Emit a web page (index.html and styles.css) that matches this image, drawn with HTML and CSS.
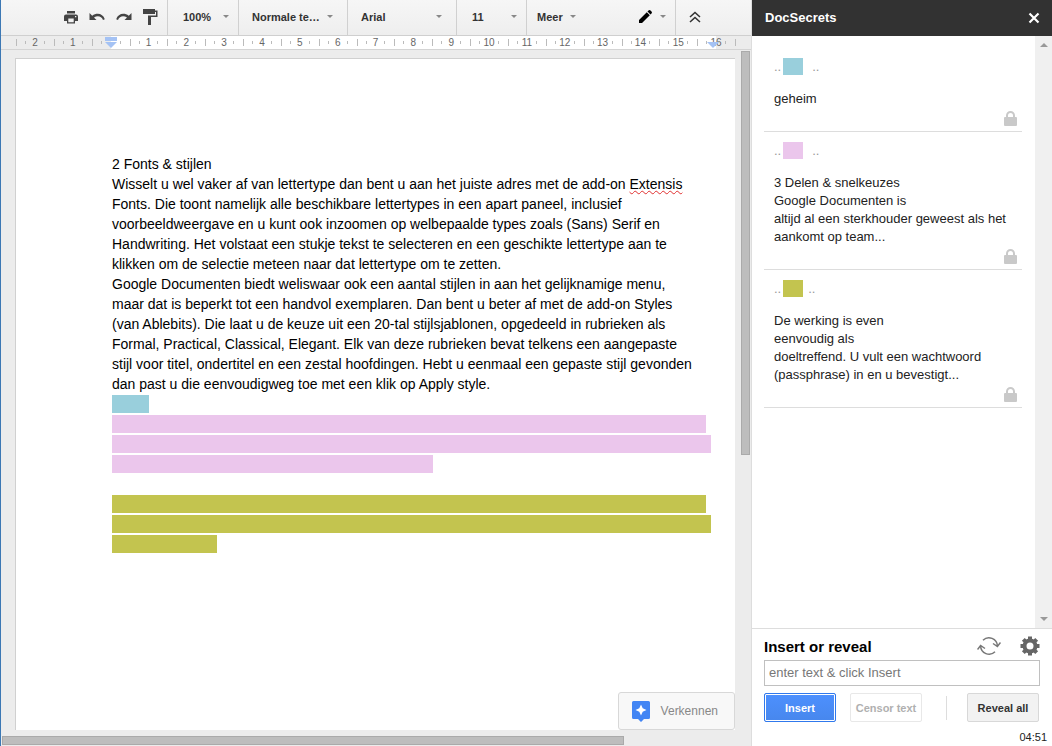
FILE: index.html
```html
<!DOCTYPE html>
<html lang="nl">
<head>
    <meta charset="UTF-8">
    <meta name="viewport" content="width=device-width, initial-scale=1.0">
    <title>DocSecrets</title>
    <link rel="stylesheet" href="styles.css">
</head>
<body>
    <main class="editor">
        <div class="toolbar">
            <div class="tool-group tool-icons">
                <button class="icon-btn" aria-label="Afdrukken">
                    <svg width="16" height="16" viewBox="0 0 16 16"><path fill="#444" d="M4 2h8v2.500H4zM3 5.500h10a2 2 0 0 1 2 2V12h-3v2.500H4V12H1V7.500a2 2 0 0 1 2-2zM5.300 9.500v3.700h5.400V9.500zM12 7v1.200h1.300V7z" fill-rule="evenodd"/></svg>
                </button>
                <button class="icon-btn" aria-label="Ongedaan maken">
                    <svg width="16" height="16" viewBox="0 0 16 16"><path fill="#444" d="M.5 4v7h7L5 8.500C8.500 6.200 12.500 7 14 11l1.800-.7C14 4.500 8 3.200 3.200 6.700z"/></svg>
                </button>
                <button class="icon-btn" aria-label="Opnieuw">
                    <svg width="16" height="16" viewBox="0 0 16 16"><path fill="#444" d="M15.500 4v7h-7L11 8.500C7.500 6.200 3.500 7 2 11l-1.800-.7C2 4.500 8 3.200 12.800 6.700z"/></svg>
                </button>
                <button class="icon-btn" aria-label="Opmaak kopiëren">
                    <svg width="16" height="16" viewBox="0 0 16 16"><path fill="#444" d="M1 0h12v1.500h2.500V8H9v8H6V6.500h8V3h-1v2H1z"/></svg>
                </button>
            </div>
            <label class="tool-group tool-zoom">
                <select class="tool-select" aria-label="Zoomen"><option>100%</option></select>
            </label>
            <label class="tool-group tool-style">
                <select class="tool-select" aria-label="Stijlen"><option>Normale te…</option></select>
            </label>
            <label class="tool-group tool-font">
                <select class="tool-select" aria-label="Lettertype"><option>Arial</option></select>
            </label>
            <label class="tool-group tool-size">
                <select class="tool-select" aria-label="Lettergrootte"><option>11</option></select>
            </label>
            <button class="tool-group tool-more">Meer</button>
            <button class="tool-group tool-mode" aria-label="Bewerkingsmodus">
                <svg width="16" height="16" viewBox="0 0 16 16"><path fill="#000" d="M2 11 9.800 3.200l3 3L5 14H2zM10.500 2.500l1-1a1.400 1.400 0 0 1 2 0l1 1a1.400 1.400 0 0 1 0 2l-1 1z"/></svg>
            </button>
            <button class="tool-group tool-collapse" aria-label="Menu's verbergen">
                <svg width="12" height="12" viewBox="0 0 12 12"><path fill="none" stroke="#333" stroke-width="1.600" d="M1 6l5-4.500L11 6M1 11l5-4.500L11 11"/></svg>
            </button>
        </div>

        <div class="ruler">
            <span class="unit unit-out">2</span>
            <span class="unit unit-out">1</span>
            <span class="unit unit-start"><i class="indent indent-first"></i></span>
            <span class="unit">1</span>
            <span class="unit">2</span>
            <span class="unit">3</span>
            <span class="unit">4</span>
            <span class="unit">5</span>
            <span class="unit">6</span>
            <span class="unit">7</span>
            <span class="unit">8</span>
            <span class="unit">9</span>
            <span class="unit">10</span>
            <span class="unit">11</span>
            <span class="unit">12</span>
            <span class="unit">13</span>
            <span class="unit">14</span>
            <span class="unit">15</span>
            <span class="unit unit-end">16<i class="indent indent-right"></i></span>
            <span class="ruler-rest"></span>
        </div>

        <div class="workspace">
            <article class="page">
                <p>2 Fonts &amp; stijlen</p>
                <p>
                    Wisselt u wel vaker af van lettertype dan bent u aan het juiste adres met de add-on <span class="misspelled">Extensis</span><br>
                    Fonts. Die toont namelijk alle beschikbare lettertypes in een apart paneel, inclusief<br>
                    voorbeeldweergave en u kunt ook inzoomen op welbepaalde types zoals (Sans) Serif en<br>
                    Handwriting. Het volstaat een stukje tekst te selecteren en een geschikte lettertype aan te<br>
                    klikken om de selectie meteen naar dat lettertype om te zetten.
                </p>
                <p>
                    Google Documenten biedt weliswaar ook een aantal stijlen in aan het gelijknamige menu,<br>
                    maar dat is beperkt tot een handvol exemplaren. Dan bent u beter af met de add-on Styles<br>
                    (van Ablebits). Die laat u de keuze uit een 20-tal stijlsjablonen, opgedeeld in rubrieken als<br>
                    Formal, Practical, Classical, Elegant. Elk van deze rubrieken bevat telkens een aangepaste<br>
                    stijl voor titel, ondertitel en een zestal hoofdingen. Hebt u eenmaal een gepaste stijl gevonden<br>
                    dan past u die eenvoudigweg toe met een klik op Apply style.
                </p>
                <div class="secret-block">
                    <div class="secret blue" style="width: 37px"></div>
                    <div class="secret pink" style="width: 594px"></div>
                    <div class="secret pink" style="width: 599px"></div>
                    <div class="secret pink" style="width: 321px"></div>
                </div>
                <div class="secret-block">
                    <div class="secret olive" style="width: 594px"></div>
                    <div class="secret olive" style="width: 599px"></div>
                    <div class="secret olive" style="width: 105px"></div>
                </div>
            </article>
            <div class="scroll-v"><div class="thumb"></div></div>
            <button class="explore">
                <svg width="18" height="21" viewBox="0 0 18 21"><path fill="#4285f4" d="M1.500 0h15A1.500 1.500 0 0 1 18 1.500v15a1.500 1.500 0 0 1-1.500 1.500H12l-3 3-3-3H1.500A1.500 1.500 0 0 1 0 16.500v-15A1.500 1.500 0 0 1 1.500 0z"/><path fill="#fff" d="M9 3.500 10.700 7.300 14.500 9l-3.800 1.700L9 14.500l-1.700-3.800L3.500 9l3.800-1.700z"/></svg>
                Verkennen
            </button>
        </div>
        <div class="scroll-h"><div class="thumb"></div></div>
    </main>

    <aside class="sidebar">
        <header class="side-header">
            <h1>DocSecrets</h1>
            <button class="icon-btn" aria-label="Sluiten">
                <svg width="12" height="12" viewBox="0 0 12 12"><path fill="none" stroke="#fff" stroke-width="2.200" d="M1.500 1.500l9 9M10.500 1.500l-9 9"/></svg>
            </button>
        </header>

        <div class="side-body">
            <ul class="secrets">
                <li>
                    <div class="tag"><span>..</span><b class="swatch blue"></b><span>..</span></div>
                    <p>geheim</p>
                    <svg class="lock" width="13" height="15" viewBox="0 0 13 15"><path fill="#c9c9c9" d="M2 6V4.500a4.500 4.500 0 0 1 9 0V6h1a1 1 0 0 1 1 1v7a1 1 0 0 1-1 1H1a1 1 0 0 1-1-1V7a1 1 0 0 1 1-1zM4 6h5V4.500a2.500 2.500 0 0 0-5 0z" fill-rule="evenodd"/></svg>
                </li>
                <li>
                    <div class="tag"><span>..</span><b class="swatch pink"></b><span>..</span></div>
                    <p>3 Delen &amp; snelkeuzes<br>Google Documenten is<br>altijd al een sterkhouder geweest als het aankomt op team...</p>
                    <svg class="lock" width="13" height="15" viewBox="0 0 13 15"><path fill="#c9c9c9" d="M2 6V4.500a4.500 4.500 0 0 1 9 0V6h1a1 1 0 0 1 1 1v7a1 1 0 0 1-1 1H1a1 1 0 0 1-1-1V7a1 1 0 0 1 1-1zM4 6h5V4.500a2.500 2.500 0 0 0-5 0z" fill-rule="evenodd"/></svg>
                </li>
                <li>
                    <div class="tag tag-short"><span>..</span><b class="swatch olive"></b><span>..</span></div>
                    <p>De werking is even<br>eenvoudig als<br>doeltreffend. U vult een wachtwoord (passphrase) in en u bevestigt...</p>
                    <svg class="lock" width="13" height="15" viewBox="0 0 13 15"><path fill="#c9c9c9" d="M2 6V4.500a4.500 4.500 0 0 1 9 0V6h1a1 1 0 0 1 1 1v7a1 1 0 0 1-1 1H1a1 1 0 0 1-1-1V7a1 1 0 0 1 1-1zM4 6h5V4.500a2.500 2.500 0 0 0-5 0z" fill-rule="evenodd"/></svg>
                </li>
            </ul>
            <div class="side-scroll"><i class="arrow-up"></i><i class="arrow-down"></i></div>
        </div>

        <footer class="side-footer">
            <div class="footer-title">
                <label for="secretText">Insert or reveal</label>
                <button class="icon-btn" aria-label="Refresh">
                    <svg width="24" height="20" viewBox="0 0 24 20"><g fill="none" stroke="#777" stroke-width="1.500"><path d="M6 4.200A8.500 8.500 0 0 1 20.400 10M16 7.500l4.400 3L23.500 6.500"/><path d="M18 15.800A8.500 8.500 0 0 1 3.600 10M8 12.500l-4.400-3L.5 13.500"/></g></svg>
                </button>
                <button class="icon-btn" aria-label="Settings">
                    <svg width="20" height="20" viewBox="0 0 20 20"><circle cx="10" cy="10" r="5.500" fill="none" stroke="#666" stroke-width="4"/><path stroke="#666" stroke-width="4" d="M10 .5v3M10 16.500v3M.5 10h3M16.500 10h3M3.300 3.300l2.100 2.100M14.600 14.600l2.100 2.100M3.300 16.700l2.100-2.100M14.600 5.400l2.100-2.100"/></svg>
                </button>
            </div>
            <input type="text" class="text-input" id="secretText" placeholder="enter text &amp; click Insert">
            <div class="actions">
                <button class="btn btn-primary">Insert</button>
                <button class="btn btn-disabled" disabled>Censor text</button>
                <span class="divider"></span>
                <button class="btn">Reveal all</button>
            </div>
            <div class="timer">04:51</div>
        </footer>
    </aside>
</body>
</html>
```
FILE: styles.css
```css
* {
    box-sizing: border-box;
}
body {
    display: flex;
    height: 100vh;
    margin: 0;
    overflow: hidden;
    font-family: Arial, "Liberation Sans", sans-serif;
    font-size: 13px;
    color: #222;
}
p, h1, ul {
    margin: 0;
    padding: 0;
}
button, select, input {
    font-family: inherit;
    margin: 0;
}
svg {
    display: block;
}
.blue {
    background-color: #99cfdc;
}
.pink {
    background-color: #ebc6ec;
}
.olive {
    background-color: #c3c44f;
}

/* editor */
.editor {
    display: flex;
    flex-direction: column;
    flex: 1;
    min-width: 0;
    border-left: 1px solid #3c78b4;
    background-color: #ececec;
}
.toolbar {
    display: flex;
    height: 36px;
    border-bottom: 1px solid #cfcfcf;
    background: linear-gradient(#f6f6f6, #eee);
}
.tool-group {
    display: flex;
    align-items: center;
    justify-content: space-between;
    padding: 0 9px 2px 13px;
    border: 0;
    border-right: 1px solid #d0d0d0;
    background: none;
    font-size: 11px;
    font-weight: bold;
    color: #333;
}
.tool-group::after {
    content: "";
    border: 3px solid transparent;
    border-top-color: #888;
    border-bottom: 0;
}
.tool-icons::after,
.tool-collapse::after {
    display: none;
}
.tool-icons {
    width: 167px;
    padding-left: 62px;
}
.tool-select {
    flex: 1;
    min-width: 0;
    padding: 0;
    border: 0;
    background: none;
    appearance: none;
    font-size: 11px;
    font-weight: bold;
    color: #333;
}
.tool-zoom {
    width: 71px;
    padding-left: 15px;
}
.tool-style {
    width: 109px;
    padding-right: 14px;
}
.tool-font {
    width: 109px;
    padding-right: 14px;
}
.tool-size {
    width: 70px;
    padding-left: 15px;
}
.tool-more {
    gap: 7px;
    padding-left: 10px;
    border: 0;
}
.tool-mode {
    gap: 7px;
    margin-left: auto;
}
.tool-collapse {
    width: 75px;
    border: 0;
}
.icon-btn {
    padding: 0;
    border: 0;
    background: none;
}

.ruler {
    display: flex;
    height: 14px;
    padding-left: 15px;
    border-bottom: 1px solid #d4d4d4;
    background-color: #ececec;
    font-size: 10px;
    color: #666;
}
.unit {
    position: relative;
    display: flex;
    flex: 1;
    align-items: center;
    justify-content: space-between;
    padding: 0 9px;
    background: linear-gradient(#bbb, #bbb) 0 50% / 1px 7px no-repeat #fff;
}
.unit::before,
.unit::after {
    content: "";
    width: 1px;
    height: 3px;
    background-color: #bbb;
}
.unit-out {
    background-color: transparent;
}
.unit-start {
    background: linear-gradient(#bbb, #bbb) 0 50% / 1px 7px no-repeat, linear-gradient(90deg, #ececec 50%, #fff 50%);
}
.unit-end {
    background: linear-gradient(#bbb, #bbb) 0 50% / 1px 7px no-repeat, linear-gradient(90deg, #fff 50%, #ececec 50%);
}
.ruler-rest {
    width: 16px;
    background: linear-gradient(#bbb, #bbb) 0 50% / 1px 7px no-repeat;
}
.indent {
    position: absolute;
    left: 50%;
    margin-left: -6px;
    border: 6px solid transparent;
    border-top-color: #a4c2f4;
    border-bottom: 0;
}
.indent-first {
    top: 6px;
}
.indent-first::before {
    content: "";
    position: absolute;
    left: -6px;
    bottom: 7px;
    width: 12px;
    height: 4px;
    background-color: #a4c2f4;
}
.indent-right {
    top: 6px;
    margin-left: -9px;
}

.workspace {
    position: relative;
    display: flex;
    flex: 1;
    min-height: 0;
}
.page {
    flex: 1;
    margin: 8px 6px 6px 14px;
    padding: 95px 18px 0 96px;
    border: 1px solid #d0d0d0;
    border-right: 0;
    border-bottom: 0;
    background-color: #fff;
    font-size: 14px;
    line-height: 20px;
    color: #000;
}
.misspelled {
    text-decoration: underline wavy #e03030 1px;
}
.secret-block {
    margin: 1px 0 22px;
}
.secret {
    height: 18px;
    margin-bottom: 2px;
    max-width: 100%;
}
.scroll-v {
    width: 10px;
    padding-top: 1px;
}
.scroll-v .thumb {
    width: 9px;
    height: 59%;
}
.scroll-h {
    height: 10px;
    padding-left: 1px;
}
.scroll-h .thumb {
    width: 83%;
    height: 9px;
}
.thumb {
    border: 1px solid #aaa;
    background-color: #bdbdbd;
}
.explore {
    position: absolute;
    right: 16px;
    bottom: 6px;
    display: flex;
    align-items: center;
    gap: 11px;
    height: 38px;
    padding: 0 16px 0 13px;
    border: 1px solid #d8d8d8;
    border-radius: 3px;
    background-color: #f8f8f8;
    font-size: 12px;
    color: #888;
}

/* sidebar */
.sidebar {
    display: flex;
    flex-direction: column;
    width: 301px;
    border-left: 1px solid #ddd;
    background-color: #fff;
}
.side-header {
    display: flex;
    align-items: center;
    justify-content: space-between;
    height: 36px;
    padding: 0 12px 1px 13px;
    background-color: #323232;
}
.side-header h1 {
    font-size: 13px;
    color: #fff;
}
.side-body {
    display: flex;
    flex: 1;
    min-height: 0;
}
.secrets {
    flex: 1;
    padding: 12px 13px 0 12px;
    list-style: none;
}
.secrets li {
    padding: 10px 5px 5px 10px;
    border-bottom: 1px solid #ddd;
    line-height: 18px;
}
.tag {
    display: flex;
    gap: 2px;
    height: 18px;
    margin-bottom: 14px;
    color: #999;
}
.swatch {
    width: 20px;
    height: 17px;
    margin-right: 7px;
}
.tag-short .swatch {
    margin-right: 3px;
}
.lock {
    margin: 3px 0 0 auto;
}
.side-scroll {
    display: flex;
    flex-direction: column;
    justify-content: space-between;
    align-items: center;
    width: 17px;
    padding: 7px 0;
    background-color: #f0f0f0;
}
.arrow-up,
.arrow-down {
    border: 4px solid transparent;
}
.arrow-up {
    border-top: 0;
    border-bottom-color: #999;
}
.arrow-down {
    border-bottom: 0;
    border-top-color: #999;
}
.side-footer {
    padding: 0 12px;
    border-top: 1px solid #ddd;
}
.footer-title {
    display: flex;
    align-items: center;
    gap: 19px;
    height: 31px;
    padding-top: 3px;
    font-size: 15px;
    font-weight: bold;
    color: #000;
}
.footer-title label {
    flex: 1;
}
.text-input {
    display: block;
    width: 100%;
    height: 26px;
    padding: 0 4px 1px;
    border: 1px solid #c0c0c0;
    font-size: 13px;
}
.text-input::placeholder {
    color: #777;
}
.actions {
    display: flex;
    align-items: center;
    gap: 14px;
    padding: 7px 0;
}
.btn {
    width: 72px;
    height: 29px;
    padding: 0;
    border: 1px solid #d8d8d8;
    border-radius: 2px;
    background-color: #f2f2f2;
    font-size: 11px;
    font-weight: bold;
    color: #333;
    white-space: nowrap;
}
.btn-primary {
    border-color: #3079ed;
    background: linear-gradient(#4d90fe, #4787ed);
    box-shadow: inset 0 0 0 1px #fff;
    color: #fff;
}
.btn-disabled {
    border-color: #e8e8e8;
    background-color: #fff;
    color: #b0b0b0;
}
.divider {
    width: 1px;
    height: 24px;
    margin: 0 6px 0 10px;
    background-color: #ddd;
}
.timer {
    margin-right: -7px;
    font-size: 11px;
    line-height: 17px;
    text-align: right;
}
```
